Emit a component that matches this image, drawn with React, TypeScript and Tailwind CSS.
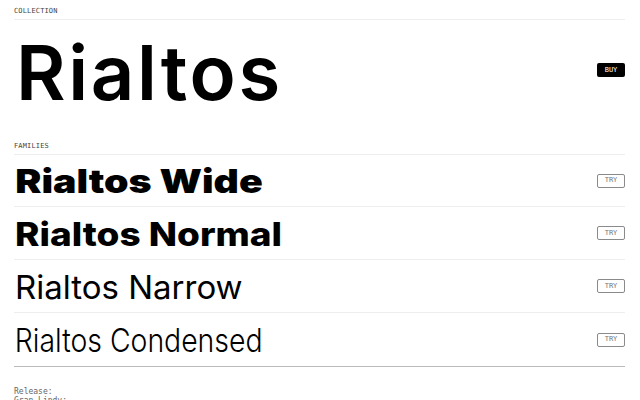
const mono = "font-['DejaVu_Sans_Mono',monospace]";

const families = [
  { name: "Rialtos Wide", cls: "font-black scale-x-[1.19]", h: "h-[52px]" },
  { name: "Rialtos Normal", cls: "font-extrabold scale-x-[1.12]", h: "h-[53px]" },
  { name: "Rialtos Narrow", cls: "font-normal", h: "h-[53px]" },
  { name: "Rialtos Condensed", cls: "font-light scale-x-[0.86]", h: "h-[53px]" },
];

function Label({ children }: { children: string }) {
  return (
    <div className={`${mono} text-[7px] leading-[8px] tracking-[0.02em] text-[#444] pt-[7px] pb-[4px] border-b border-[#eeeeee]`}>
      {children}
    </div>
  );
}

function TryButton() {
  return (
    <button className={`${mono} w-[28px] h-[14px] shrink-0 rounded-[2px] border border-[#8a8a8a] text-[7px] leading-none text-[#777] flex items-center justify-center`}>
      TRY
    </button>
  );
}

export default function App() {
  return (
    <div className="w-[640px] h-[400px] overflow-hidden bg-white pl-[14px] pr-[15px] font-['Inter',sans-serif] text-black">
      <Label>COLLECTION</Label>

      {/* Hero */}
      <div className="flex items-center justify-between pt-[14px] pb-[25px]">
        <h1 className="text-[76px] leading-[76px] font-semibold tracking-[0.035em] pl-[2px]">Rialtos</h1>
        <button className={`${mono} w-[28px] h-[14px] rounded-[2px] bg-black text-white text-[7px] leading-none flex items-center justify-center -mt-[4px]`}>
          BUY
        </button>
      </div>

      <Label>FAMILIES</Label>

      {/* Families */}
      <div className="border-b border-[#bbbbbb]">
        {families.map((f, i) => (
          <div
            key={f.name}
            className={`${f.h} flex items-center justify-between ${i < families.length - 1 ? "border-b border-[#eeeeee]" : ""}`}
          >
            <span className={`text-[33px] leading-[33px] origin-left whitespace-nowrap pl-[1px] mt-[2px] ${f.cls}`}>{f.name}</span>
            <TryButton />
          </div>
        ))}
      </div>

      <div className={`${mono} text-[8px] leading-[9px] text-[#666] pt-[20px]`}>
        <div>Release:</div>
        <div>Gran Lindy:</div>
      </div>
    </div>
  );
}
